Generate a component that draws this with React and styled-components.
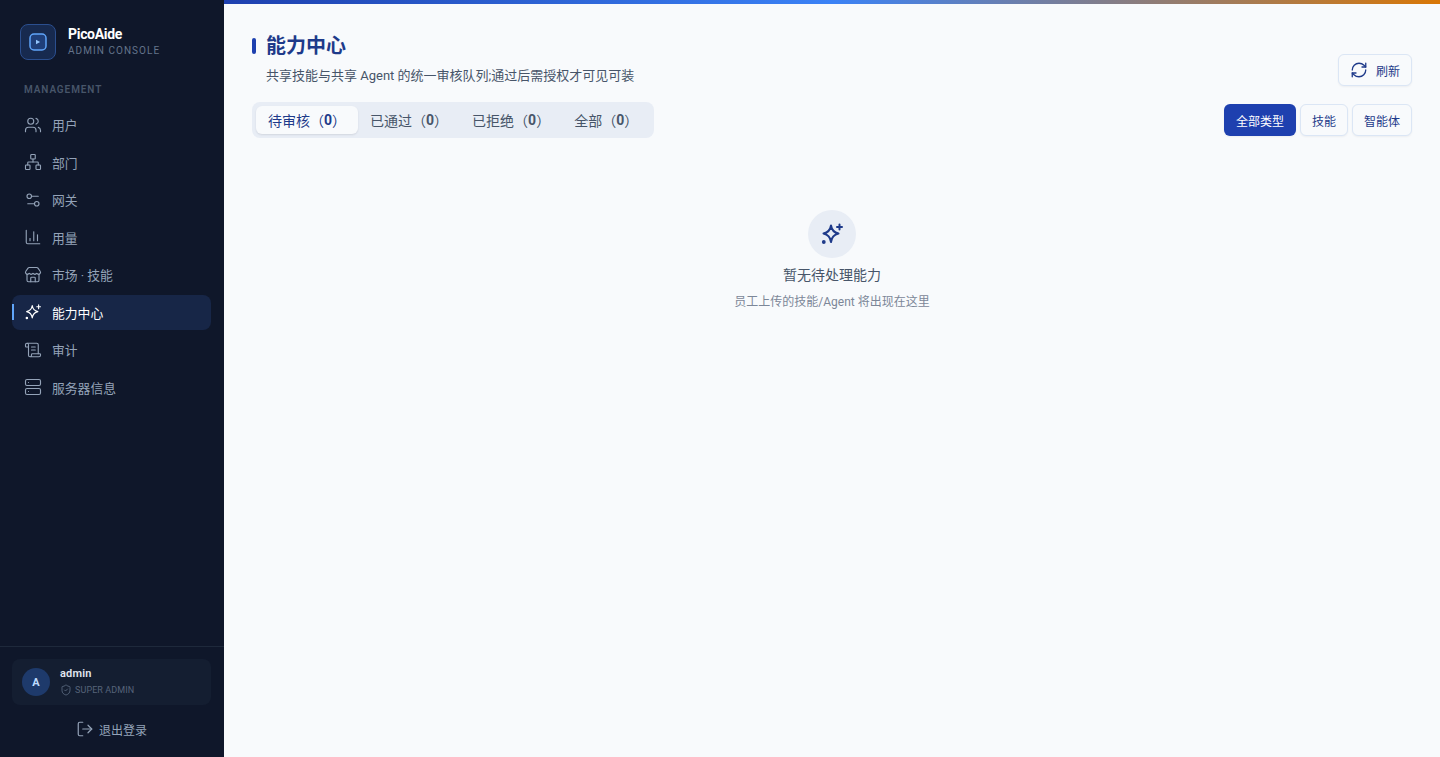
import styled, { createGlobalStyle } from 'styled-components'
import {
  Users,
  Network,
  Settings2,
  ChartColumn,
  Store,
  ScrollText,
  Server,
  LogOut,
  ShieldCheck,
  RefreshCw,
} from 'lucide-react'

const FONT = `Roboto, "Noto Sans CJK SC", sans-serif`

// four point star with a small plus and dot
const Spark = ({ size = 18, strokeWidth = 1.5 }) => (
  <svg
    width={size}
    height={size}
    viewBox='0 0 24 24'
    fill='none'
    stroke='currentColor'
    strokeWidth={strokeWidth}
    strokeLinecap='round'
    strokeLinejoin='round'
  >
    <path d='M11 3.5c.6 3.9 3 7 7.5 8-4.500 1-6.900 4.100-7.500 8.500-.6-4.400-3-7.500-7.500-8.500 4.500-1 6.900-4.100 7.500-8z' />
    <path d='M19.500 2.500v5M22 5h-5' />
    <circle cx='3.800' cy='20' r='.9' fill='currentColor' />
  </svg>
)

const navItems = [
  { label: '用户', icon: Users },
  { label: '部门', icon: Network },
  { label: '网关', icon: Settings2 },
  { label: '用量', icon: ChartColumn },
  { label: '市场 · 技能', icon: Store },
  { label: '能力中心', icon: Spark, active: true },
  { label: '审计', icon: ScrollText },
  { label: '服务器信息', icon: Server },
]

const tabs = [
  { label: '待审核', active: true },
  { label: '已通过' },
  { label: '已拒绝' },
  { label: '全部' },
]

const GlobalStyle = createGlobalStyle`
  html, body {
    margin: 0;
    height: 100%;
  }
  body {
    font-family: ${FONT};
    background: #f8fafc;
  }
  * {
    box-sizing: border-box;
  }
`

const Shell = styled.div`
  display: flex;
  height: 757px;
  overflow: hidden;
`

const Sidebar = styled.aside`
  width: 224px;
  flex-shrink: 0;
  display: flex;
  flex-direction: column;
  background: #0f172a;
`

const Brand = styled.div`
  display: flex;
  align-items: center;
  gap: 12px;
  padding: 24px 20px 0;
`

const LogoBox = styled.div`
  width: 36px;
  height: 36px;
  border-radius: 8px;
  background: #172a4f;
  border: 1px solid #2b4f8f;
  display: flex;
  align-items: center;
  justify-content: center;
`

const BrandText = styled.div`
  display: flex;
  flex-direction: column;
  padding-bottom: 2px;
`

const BrandName = styled.div`
  font-size: 14px;
  line-height: 20px;
  font-weight: 700;
  letter-spacing: -0.3px;
  color: #fff;
`

const BrandSub = styled.div`
  font-size: 10px;
  line-height: 14px;
  letter-spacing: 1.05px;
  color: #64748b;
`

const SectionLabel = styled.div`
  padding: 0 24px;
  margin-top: 23px;
  font-size: 10px;
  line-height: 14px;
  font-weight: 600;
  letter-spacing: 0.9px;
  color: #475569;
`

const Nav = styled.nav`
  display: flex;
  flex-direction: column;
  gap: 2px;
  padding: 10px 13px 0 12px;
  flex: 1;
`

const NavItem = styled.a`
  position: relative;
  display: flex;
  align-items: center;
  gap: 10px;
  height: 35.5px;
  padding: 0 12px;
  border-radius: 8px;
  font-size: 12.8px;
  color: ${(p) => (p.$active ? '#fff' : '#94a3b8')};
  background: ${(p) => (p.$active ? '#172647' : 'transparent')};

  ${(p) =>
    p.$active &&
    `
    &::before {
      content: '';
      position: absolute;
      left: 0;
      top: 9.75px;
      height: 16px;
      width: 2px;
      background: #60a5fa;
    }
  `}
`

const SideFooter = styled.div`
  border-top: 1px solid #1e293b;
  padding: 12px 13px 0 12px;
  height: 111px;
`

const UserCard = styled.div`
  display: flex;
  align-items: center;
  gap: 10px;
  height: 46px;
  padding: 0 10px;
  border-radius: 8px;
  background: #141e31;
`

const Avatar = styled.div`
  width: 28px;
  height: 28px;
  border-radius: 50%;
  background: #1e3a6b;
  color: #bfdbfe;
  font-size: 11px;
  font-weight: 700;
  display: flex;
  align-items: center;
  justify-content: center;
`

const UserInfo = styled.div`
  display: flex;
  flex-direction: column;
  gap: 1px;
  padding-bottom: 2px;
`

const UserName = styled.div`
  font-size: 11px;
  line-height: 16px;
  font-weight: 600;
  letter-spacing: 0.2px;
  color: #e2e8f0;
`

const UserRole = styled.div`
  display: flex;
  align-items: center;
  gap: 3px;
  font-size: 9px;
  line-height: 14px;
  letter-spacing: 0.1px;
  color: #566379;

  svg {
    color: #64748b;
  }
`

const Logout = styled.button`
  display: flex;
  align-items: center;
  justify-content: center;
  gap: 5px;
  width: 100%;
  height: 32px;
  margin-top: 8px;
  border: none;
  background: none;
  font-family: inherit;
  font-size: 12px;
  color: #94a3b8;
`

const Main = styled.main`
  flex: 1;
  min-width: 0;
  display: flex;
  flex-direction: column;
  background: #f8fafc;
`

const TopLine = styled.div`
  height: 4px;
  flex-shrink: 0;
  background: linear-gradient(90deg, #1e40af 0%, #3b82f6 50%, #d97706 100%);
`

const Content = styled.div`
  padding: 28px 28px 0;
`

const Header = styled.div`
  display: flex;
  justify-content: space-between;
  align-items: flex-end;
`

const TitleRow = styled.div`
  display: flex;
  align-items: center;
  gap: 10px;
`

const TitleMark = styled.span`
  width: 4px;
  height: 16px;
  border-radius: 2px;
  background: #1e40af;
`

const Title = styled.h1`
  margin: 0;
  font-size: 20px;
  line-height: 28px;
  font-weight: 600;
  color: #1e3a8a;
`

const Subtitle = styled.p`
  margin: 5px 0 0 14px;
  font-size: 13px;
  line-height: 21px;
  color: #475569;
`

const OutlineButton = styled.button`
  display: flex;
  align-items: center;
  justify-content: center;
  gap: ${(p) => p.$gap || 0}px;
  height: 32px;
  padding: 0 ${(p) => (p.$active ? 12 : 11)}px;
  border-radius: 6px;
  border: ${(p) => (p.$active ? 'none' : '1px solid #dbe6f5')};
  background: ${(p) => (p.$active ? '#1e40af' : '#f8fafc')};
  color: ${(p) => (p.$active ? '#fff' : '#1e3a8a')};
  font-family: inherit;
  font-size: 12px;
  box-shadow: 0 1px 2px rgba(15, 23, 42, 0.05);
`

const Toolbar = styled.div`
  display: flex;
  justify-content: space-between;
  align-items: center;
  margin-top: 16px;
`

const TabList = styled.div`
  display: flex;
  gap: 0;
  padding: 4px;
  border-radius: 8px;
  background: #e8edf5;
`

const Tab = styled.div`
  height: 28px;
  padding: 0 12px;
  display: flex;
  align-items: center;
  border-radius: 6px;
  font-size: 14px;
  color: ${(p) => (p.$active ? '#1e3a8a' : '#475569')};
  background: ${(p) => (p.$active ? '#f8fafc' : 'transparent')};
  box-shadow: ${(p) => (p.$active ? '0 1px 2px rgba(15, 23, 42, 0.1)' : 'none')};

  b {
    font-weight: 700;
  }
`

const FilterGroup = styled.div`
  display: flex;
  gap: 4px;
`

const Empty = styled.div`
  display: flex;
  flex-direction: column;
  align-items: center;
  margin-top: 72px;
`

const EmptyIcon = styled.div`
  width: 48px;
  height: 48px;
  border-radius: 50%;
  background: #e8edf5;
  color: #1e3a8a;
  display: flex;
  align-items: center;
  justify-content: center;
`

const EmptyTitle = styled.div`
  margin-top: 7px;
  font-size: 14px;
  line-height: 20px;
  color: #475569;
`

const EmptyHint = styled.div`
  margin-top: 8px;
  font-size: 12px;
  line-height: 18px;
  color: #7c8798;
`

const App = () => {
  return (
    <>
      <GlobalStyle />
      <Shell>
        <Sidebar>
          <Brand>
            <LogoBox>
              <svg width='18' height='18' viewBox='0 0 18 18' fill='none'>
                <rect x='1' y='1' width='16' height='16' rx='4' fill='#1f3f7a' stroke='#60a5fa' strokeWidth='1.5' />
                <path d='M7 6.800v4.400L11.200 9z' fill='#93c5fd' />
              </svg>
            </LogoBox>
            <BrandText>
              <BrandName>PicoAide</BrandName>
              <BrandSub>ADMIN CONSOLE</BrandSub>
            </BrandText>
          </Brand>
          <SectionLabel>MANAGEMENT</SectionLabel>
          <Nav>
            {navItems.map(({ label, icon: Icon, active }) => (
              <NavItem key={label} $active={active}>
                <Icon size={18} strokeWidth={1.5} />
                {label}
              </NavItem>
            ))}
          </Nav>
          <SideFooter>
            <UserCard>
              <Avatar>A</Avatar>
              <UserInfo>
                <UserName>admin</UserName>
                <UserRole>
                  <ShieldCheck size={12} strokeWidth={1.5} />
                  SUPER ADMIN
                </UserRole>
              </UserInfo>
            </UserCard>
            <Logout>
              <LogOut size={18} strokeWidth={1.6} />
              退出登录
            </Logout>
          </SideFooter>
        </Sidebar>
        <Main>
          <TopLine />
          <Content>
            <Header>
              <div>
                <TitleRow>
                  <TitleMark />
                  <Title>能力中心</Title>
                </TitleRow>
                <Subtitle>共享技能与共享 Agent 的统一审核队列;通过后需授权才可见可装</Subtitle>
              </div>
              <OutlineButton $gap={8}>
                <RefreshCw size={18} strokeWidth={1.75} />
                刷新
              </OutlineButton>
            </Header>
            <Toolbar>
              <TabList>
                {tabs.map((tab) => (
                  <Tab key={tab.label} $active={tab.active}>
                    {tab.label}（<b>0</b>）
                  </Tab>
                ))}
              </TabList>
              <FilterGroup>
                <OutlineButton $active>全部类型</OutlineButton>
                <OutlineButton>技能</OutlineButton>
                <OutlineButton>智能体</OutlineButton>
              </FilterGroup>
            </Toolbar>
            <Empty>
              <EmptyIcon>
                <Spark size={24} strokeWidth={2} />
              </EmptyIcon>
              <EmptyTitle>暂无待处理能力</EmptyTitle>
              <EmptyHint>员工上传的技能/Agent 将出现在这里</EmptyHint>
            </Empty>
          </Content>
        </Main>
      </Shell>
    </>
  )
}

export default App
